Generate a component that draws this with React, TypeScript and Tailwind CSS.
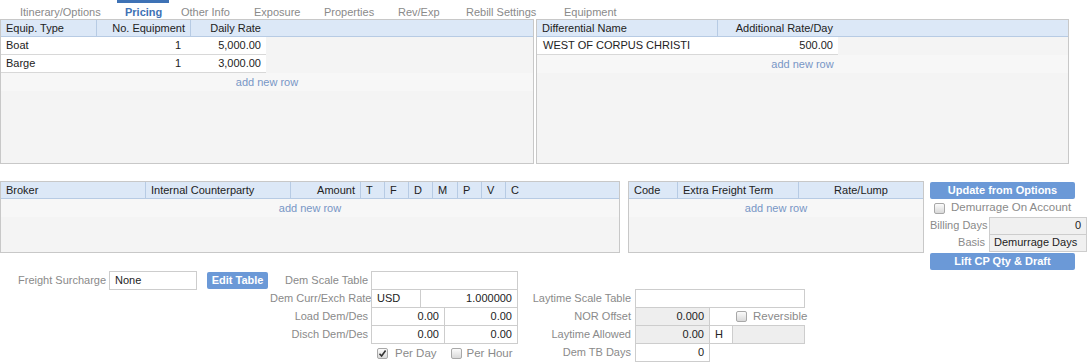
import React from 'react';

const tabs = [
  { label: 'Itinerary/Options', w: 'w-[117px] pl-[20px]' },
  { label: 'Pricing', w: 'w-[52px] pl-[8px]', active: true },
  { label: 'Other Info', w: 'w-[74px] pl-[12px]' },
  { label: 'Exposure', w: 'w-[69px] pl-[11px]' },
  { label: 'Properties', w: 'w-[74px] pl-[12px]' },
  { label: 'Rev/Exp', w: 'w-[66px] pl-[12px]' },
  { label: 'Rebill Settings', w: 'w-[100px] pl-[14px]' },
  { label: 'Equipment', w: 'w-[88px] pl-[12px]' },
];

function Check({ checked = false }: { checked?: boolean }) {
  return (
    <span className="w-[11px] h-[11px] rounded-[2px] border border-[#a8a8a8] bg-linear-to-b from-[#fbfbfb] to-[#d9d9d9] flex items-center justify-center shrink-0">
      {checked && (
        <svg width="9" height="9" viewBox="0 0 9 9">
          <path d="M1.5 4.8 L3.6 7 L7.6 1.6" fill="none" stroke="#333" strokeWidth="1.6" />
        </svg>
      )}
    </span>
  );
}

function Head({ w, right, center, last, children }: { w: string; right?: boolean; center?: boolean; last?: boolean; children?: React.ReactNode }) {
  return (
    <div
      className={`${w} h-full flex items-center px-[5px] whitespace-nowrap ${last ? '' : 'border-r border-[#b7cbe4]'} ${
        right ? 'justify-end' : center ? 'justify-center' : ''
      }`}
    >
      {children}
    </div>
  );
}

function AddRow() {
  return <div className="h-[18px] flex items-center justify-center text-[#7896c6] bg-[#f7f7f7]">add new row</div>;
}

function Btn({ w, children }: { w: string; children: React.ReactNode }) {
  return (
    <div className={`${w} h-[17px] rounded-[2px] bg-[#6b99d7] text-white font-bold flex items-center justify-center whitespace-nowrap`}>
      {children}
    </div>
  );
}

const box = 'border border-[#cdcdcd] h-[19px] flex items-center px-[5px] shrink-0';

export default function App() {
  return (
    <div className="w-[1088px] h-[362px] overflow-hidden bg-white text-[11px] leading-none text-[#222] whitespace-nowrap font-['Liberation_Sans',Arial,sans-serif]">
      {/* tabs */}
      <div className="flex h-[19px]">
        {tabs.map((t) => (
          <div
            key={t.label}
            className={
              t.active
                ? `${t.w} h-full flex items-center border-t-[3px] border-[#3e72b5] text-[#3e72b5] font-bold pt-[3px]`
                : `${t.w} h-full flex items-center pt-[6px] text-[#8a8a8a]`
            }
          >
            {t.label}
          </div>
        ))}
      </div>

      {/* top grids */}
      <div className="flex gap-[2px] h-[145px]">
        <div className="w-[534px] border border-[#c8c8c8] bg-[#f4f4f4]">
          <div className="h-[17px] flex bg-[#dce8f7] border-b border-[#b7cbe4]">
            <Head w="w-[96px]">Equip. Type</Head>
            <Head w="w-[94px]" right>No. Equipment</Head>
            <Head w="w-[75px]" right last>Daily Rate</Head>
          </div>
          {[
            ['Boat', '1', '5,000.00'],
            ['Barge', '1', '3,000.00'],
          ].map((r) => (
            <div key={r[0]} className="w-[265px] h-[18px] flex items-center bg-white border-b border-[#d8d8d8]">
              <div className="w-[96px] px-[5px]">{r[0]}</div>
              <div className="w-[94px] px-[5px] text-right pr-[10px]">{r[1]}</div>
              <div className="w-[75px] px-[5px] text-right">{r[2]}</div>
            </div>
          ))}
          <AddRow />
        </div>

        <div className="w-[533px] border border-[#c8c8c8] bg-[#f4f4f4]">
          <div className="h-[17px] flex bg-[#dce8f7] border-b border-[#b7cbe4]">
            <Head w="w-[181px]">Differential Name</Head>
            <Head w="w-[120px]" right last>Additional Rate/Day</Head>
          </div>
          <div className="w-[301px] h-[18px] flex items-center bg-white border-b border-[#d8d8d8]">
            <div className="w-[181px] px-[6px]">WEST OF CORPUS CHRISTI</div>
            <div className="w-[120px] px-[5px] text-right">500.00</div>
          </div>
          <AddRow />
        </div>
      </div>

      {/* middle section */}
      <div className="flex mt-[17px] h-[90px]">
        <div className="w-[620px] h-[72px] border border-[#c8c8c8] bg-[#f4f4f4]">
          <div className="h-[17px] flex bg-[#dce8f7] border-b border-[#b7cbe4]">
            <Head w="w-[145px]">Broker</Head>
            <Head w="w-[145px]">Internal Counterparty</Head>
            <Head w="w-[70px]" right>Amount</Head>
            <Head w="w-[24px]">T</Head>
            <Head w="w-[24px]">F</Head>
            <Head w="w-[24px]">D</Head>
            <Head w="w-[25px]">M</Head>
            <Head w="w-[24px]">P</Head>
            <Head w="w-[24px]">V</Head>
            <Head w="w-[60px]" last>C</Head>
          </div>
          <AddRow />
        </div>

        <div className="ml-[8px] w-[296px] h-[72px] border border-[#c8c8c8] bg-[#f4f4f4]">
          <div className="h-[17px] flex bg-[#dce8f7] border-b border-[#b7cbe4]">
            <Head w="w-[49px]">Code</Head>
            <Head w="w-[121px]">Extra Freight Term</Head>
            <Head w="w-[124px]" center last>Rate/Lump</Head>
          </div>
          <AddRow />
        </div>

        <div className="ml-[6px] flex flex-col">
          <div className="mt-[1px]">
            <Btn w="w-[145px]">Update from Options</Btn>
          </div>
          <div className="h-[18px] flex items-center gap-[6px] pl-[4px] text-[#8a8a8a] text-[11.5px]">
            <Check />
            <span>Demurrage On Account</span>
          </div>
          <div className="flex items-center h-[17px]">
            <span className="w-[59px] text-[#8a8a8a]">Billing Days</span>
            <div className="w-[98px] h-[18px] border border-[#cdcdcd] bg-[#f0f0f0] flex items-center justify-end px-[5px]">0</div>
          </div>
          <div className="flex items-center h-[17px]">
            <span className="w-[59px] text-[#8a8a8a] text-right pr-[4px]">Basis</span>
            <div className="w-[98px] h-[18px] border border-[#cdcdcd] bg-[#f0f0f0] flex items-center px-[4px]">Demurrage Days</div>
          </div>
          <div className="mt-[2px]">
            <Btn w="w-[145px]">Lift CP Qty &amp; Draft</Btn>
          </div>
        </div>
      </div>

      {/* bottom form */}
      <div className="flex items-start">
        <div className="w-[270px] shrink-0 h-[19px] flex items-center">
          <span className="ml-[18px] text-[#8a8a8a]">Freight Surcharge</span>
          <div className={`${box} ml-[3px] w-[88px]`}>None</div>
          <div className="ml-[10px]">
            <Btn w="w-[61px]">Edit Table</Btn>
          </div>
        </div>

        <div className="flex flex-col">
          {[
            ['Dem Scale Table', <div key="a" className={`${box} w-[147px]`} />],
            [
              'Dem Curr/Exch Rate',
              <div key="b" className="flex">
                <div className={`${box} w-[50px]`}>USD</div>
                <div className={`${box} -ml-px w-[98px] justify-end`}>1.000000</div>
              </div>,
            ],
            [
              'Load Dem/Des',
              <div key="c" className="flex">
                <div className={`${box} w-[74px] justify-end`}>0.00</div>
                <div className={`${box} -ml-px w-[74px] justify-end`}>0.00</div>
              </div>,
            ],
            [
              'Disch Dem/Des',
              <div key="d" className="flex">
                <div className={`${box} w-[74px] justify-end`}>0.00</div>
                <div className={`${box} -ml-px w-[74px] justify-end`}>0.00</div>
              </div>,
            ],
          ].map(([label, input], i) => (
            <div key={i} className={`flex items-center ${i ? '-mt-px' : ''}`}>
              <span className="w-[101px] shrink-0 pr-[3px] text-right text-[#8a8a8a]">{label}</span>
              {input}
            </div>
          ))}
          <div className="flex items-center h-[19px] pl-[107px] text-[#8a8a8a] text-[11.5px]">
            <Check checked />
            <span className="ml-[7px]">Per Day</span>
            <span className="ml-[14px]">
              <Check />
            </span>
            <span className="ml-[5px]">Per Hour</span>
          </div>
        </div>

        <div className="flex flex-col mt-[18px]">
          {[
            ['Laytime Scale Table', <div key="a" className={`${box} w-[170px]`} />],
            [
              'NOR Offset',
              <div key="b" className="flex items-center">
                <div className={`${box} w-[75px] justify-end bg-[#eeeeee]`}>0.000</div>
                <span className="ml-[26px]">
                  <Check />
                </span>
                <span className="ml-[6px] text-[#8a8a8a] text-[11.5px]">Reversible</span>
              </div>,
            ],
            [
              'Laytime Allowed',
              <div key="c" className="flex">
                <div className={`${box} w-[75px] justify-end bg-[#eeeeee]`}>0.00</div>
                <div className={`${box} -ml-px w-[24px]`}>H</div>
                <div className={`${box} -ml-px w-[73px] bg-[#eeeeee]`} />
              </div>,
            ],
            ['Dem TB Days', <div key="d" className={`${box} w-[75px] justify-end`}>0</div>],
          ].map(([label, input], i) => (
            <div key={i} className={`flex items-center ${i ? '-mt-px' : ''}`}>
              <span className="w-[117px] shrink-0 pr-[4px] text-right text-[#8a8a8a]">{label}</span>
              {input}
            </div>
          ))}
        </div>
      </div>
    </div>
  );
}
